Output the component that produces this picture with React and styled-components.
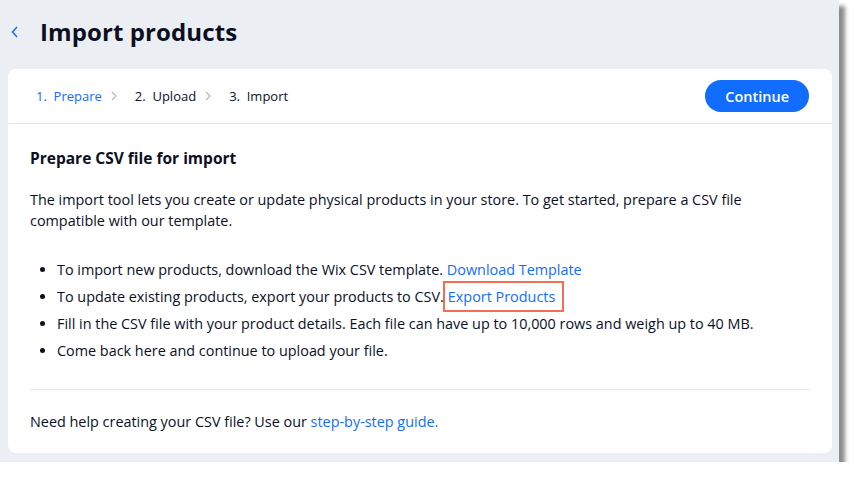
import React from "react";
import styled, { createGlobalStyle } from "styled-components";

const Global = createGlobalStyle`
  html, body { margin: 0; padding: 0; background: #ffffff; }
  body { font-family: "Open Sans", "Noto Sans", sans-serif; color: #162d3d; }
`;

const Frame = styled.div`
  width: 839px;
  height: 462px;
  background: #ebeef3;
  box-shadow: 6px 6px 4px rgba(0, 0, 0, 0.45);
  display: flex;
  flex-direction: column;
  padding: 0 8px;
  box-sizing: border-box;
`;

const TopBar = styled.div`
  height: 69px;
  display: flex;
  align-items: center;
  gap: 20px;
  padding-left: 2px;
  box-sizing: border-box;
  padding-bottom: 6px;
`;

const Back = styled.span`
  display: flex;
  color: #116dff;
`;

const Title = styled.h1`
  margin: 0;
  font-family: "Open Sans", sans-serif;
  font-size: 24px;
  font-weight: 700;
  color: #0c0f1f;
  letter-spacing: 0.1px;
`;

const Card = styled.div`
  background: #fff;
  border-radius: 8px;
  width: 824px;
  height: 384px;
  display: flex;
  flex-direction: column;
`;

const Header = styled.div`
  height: 54px;
  border-bottom: 1px solid #e3e6ea;
  display: flex;
  align-items: center;
  justify-content: space-between;
  padding: 0 23px 0 28px;
`;

const Steps = styled.div`
  display: flex;
  align-items: center;
  gap: 17px;
  font-size: 13px;
`;

const Step = styled.span`
  display: flex;
  align-items: center;
  gap: 6px;
  color: ${(p) => (p.$active ? "#116dff" : "#0c0f1f")};
`;

const Chev = styled.span`
  color: #b4b9c2;
  display: flex;
  margin-left: 2px;
`;

const Button = styled.button`
  height: 32px;
  padding: 0 20px;
  border: none;
  border-radius: 16px;
  background: #116dff;
  color: #fff;
  font-family: "Open Sans", sans-serif;
  font-size: 14.5px;
  font-weight: 600;
`;

const Body = styled.div`
  padding: 22px 22px 0 22px;
  display: flex;
  flex-direction: column;
`;

const SubTitle = styled.h2`
  margin: 0;
  font-size: 15.5px;
  font-weight: 700;
  color: #0c0f1f;
  line-height: 24px;
`;

const Para = styled.p`
  margin: 19px 0 0 0;
  font-size: 14.4px;
  line-height: 21px;
  color: #0c0f1f;
`;

const List = styled.ul`
  margin: 25px 0 0 0;
  padding-left: 27px;
  font-size: 14.4px;
  color: #0c0f1f;
`;

const Item = styled.li`
  line-height: 27px;
`;

const Link = styled.a`
  color: #116dff;
  text-decoration: none;
`;

const Boxed = styled.span`
  border: 2px solid #f46d55;
  padding: 4px 7px 4px 3px;
  margin-left: -1px;
`;

const Divider = styled.hr`
  margin: 25px 0 0 0;
  border: none;
  border-top: 1px solid #e3e6ea;
`;

const Footer = styled.p`
  margin: 21px 0 0 0;
  font-size: 14.4px;
  line-height: 21px;
  color: #0c0f1f;
`;

const ChevronRight = () => (
  <svg width="8" height="10" viewBox="0 0 8 10" fill="none">
    <path d="M2 1l4 4-4 4" stroke="currentColor" strokeWidth="1.2" />
  </svg>
);

export default function App() {
  return (
    <>
      <Global />
      <Frame>
        <TopBar>
          <Back>
            <svg width="10" height="16" viewBox="0 0 10 16" fill="none">
              <path d="M7 3L2.5 8 7 13" stroke="currentColor" strokeWidth="1.5" />
            </svg>
          </Back>
          <Title>Import products</Title>
        </TopBar>
        <Card>
          <Header>
            <Steps>
              <Step $active>
                1.&nbsp; Prepare <Chev><ChevronRight /></Chev>
              </Step>
              <Step>
                2.&nbsp; Upload <Chev><ChevronRight /></Chev>
              </Step>
              <Step>3.&nbsp; Import</Step>
            </Steps>
            <Button>Continue</Button>
          </Header>
          <Body>
            <SubTitle>Prepare CSV file for import</SubTitle>
            <Para>
              The import tool lets you create or update physical products in your store. To get started, prepare a CSV file
              compatible with our template.
            </Para>
            <List>
              <Item>
                To import new products, download the Wix CSV template. <Link>Download Template</Link>
              </Item>
              <Item>
                To update existing products, export your products to CSV.<Boxed><Link>Export Products</Link></Boxed>
              </Item>
              <Item>Fill in the CSV file with your product details. Each file can have up to 10,000 rows and weigh up to 40 MB.</Item>
              <Item>Come back here and continue to upload your file.</Item>
            </List>
            <Divider />
            <Footer>
              Need help creating your CSV file? Use our <Link>step-by-step guide.</Link>
            </Footer>
          </Body>
        </Card>
      </Frame>
    </>
  );
}
